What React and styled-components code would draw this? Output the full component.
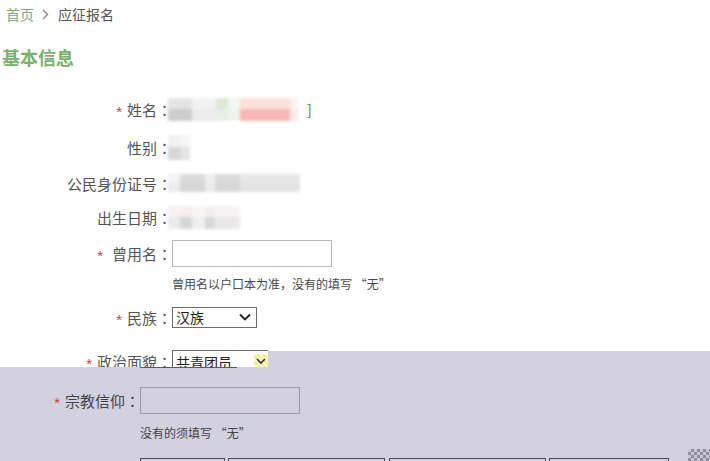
import React from "react";
import styled, { createGlobalStyle } from "styled-components";

const GlobalStyle = createGlobalStyle`
  html, body { margin: 0; padding: 0; background: #fff; }
  body { font-family: "Noto Sans CJK SC", "Noto Sans", sans-serif; color: #555; }
`;

const Page = styled.div`
  width: 710px;
  height: 461px;
  overflow: hidden;
  display: flex;
  flex-direction: column;
`;

const Breadcrumb = styled.nav`
  display: flex;
  align-items: center;
  height: 28px;
  padding-left: 6px;
  font-size: 14px;
  line-height: 28px;
`;

const CrumbLink = styled.span`
  color: #86a67c;
`;

const CrumbSep = styled.span`
  display: inline-flex;
  margin: 0 9px 0 8px;
  color: #8a8a8a;
`;

const CrumbCurrent = styled.span`
  color: #555;
`;

const Title = styled.h2`
  margin: 18px 0 0;
  padding-left: 2px;
  height: 22px;
  line-height: 22px;
  font-size: 18px;
  font-weight: 700;
  color: #7cb06e;
`;

const Divider = styled.div`
  margin-top: 11px;
  height: 1px;
  background: #cacaca;
`;

const Row = styled.div`
  display: flex;
  align-items: ${(p) => p.$align || "center"};
  height: ${(p) => p.$h}px;
  margin-top: ${(p) => p.$mt}px;
  overflow: ${(p) => (p.$clip ? "hidden" : "visible")};
  flex-shrink: 0;
`;

const LabelCell = styled.div`
  width: ${(p) => p.$w || 172}px;
  height: ${(p) => p.$lh || 28}px;
  flex-shrink: 0;
  display: flex;
  justify-content: flex-end;
  align-items: center;
  font-size: 15px;
  color: ${(p) => p.$color || "#555"};
  white-space: nowrap;
`;

const Star = styled.span`
  color: #c9403a;
  font-family: "Liberation Sans", sans-serif;
  font-size: 15px;
  margin-right: ${(p) => p.$gap || 5}px;
  transform: translateY(2px);
`;

const Colon = styled.span`
  font-family: "Noto Sans CJK JP", sans-serif;
`;

const Mosaic = styled.div`
  display: flex;
  margin-left: -4px;
  height: ${(p) => p.$h}px;
  filter: blur(1.8px);
`;

const Cell = styled.div`
  width: ${(p) => p.$w}px;
  background: linear-gradient(${(p) => p.$top} 0 50%, ${(p) => p.$bottom} 50% 100%);
`;

const Bracket = styled.span`
  margin-left: 9px;
  font-size: 14px;
  color: #666;
`;

const TextInput = styled.div`
  box-sizing: border-box;
  width: 160px;
  height: 27px;
  border: 1px solid ${(p) => p.$border || "#b8b8b8"};
  background: ${(p) => p.$bg || "#fff"};
`;

const Hint = styled.div`
  margin-top: ${(p) => p.$mt}px;
  padding-left: ${(p) => p.$pl}px;
  height: 16px;
  line-height: 16px;
  font-size: 12px;
  color: ${(p) => p.$color || "#4a4a4a"};
  flex-shrink: 0;
`;

const SelectBox = styled.div`
  box-sizing: border-box;
  display: flex;
  align-items: center;
  width: ${(p) => p.$w}px;
  height: ${(p) => p.$h}px;
  padding-left: 3px;
  border: 1px solid #6e6e6e;
  ${(p) => (p.$open ? "border-right: none; border-bottom: none;" : "")}
  font-size: 14px;
  color: #222;
  background: #fff;
  flex-shrink: 0;
`;

const Chevron = styled.svg`
  margin-left: auto;
  margin-right: 5px;
`;

const Glitch = styled.span`
  display: inline-flex;
  align-items: center;
  justify-content: center;
  margin-left: auto;
  width: 14px;
  height: 15px;
  background: repeating-linear-gradient(45deg, #f4f08c 0 2px, #fbfbd8 2px 4px);
`;

const Fill = styled.div`
  flex: 1;
  align-self: stretch;
  margin-top: 1px;
  background: #d3d1e0;
`;

const Shade = styled.section`
  flex: 1;
  display: flex;
  flex-direction: column;
  background: #d3d1e0;
`;

const TopLine = styled.div`
  margin-left: 140px;
  width: 97px;
  height: 1px;
  background: #5a5a62;
  flex-shrink: 0;
`;

const Boxes = styled.div`
  display: flex;
  align-items: flex-start;
  margin-top: ${(p) => p.$mt}px;
  padding-left: 140px;
  flex-shrink: 0;
`;

const Box = styled.div`
  box-sizing: border-box;
  width: ${(p) => p.$w}px;
  height: 12px;
  margin-left: ${(p) => p.$ml || 0}px;
  border: 1.5px solid #4b4a56;
  border-bottom: none;
`;

const Checker = styled.div`
  margin-left: auto;
  margin-top: -9px;
  width: 22px;
  height: 16px;
  background-color: #b8b6c6;
  background-image: repeating-conic-gradient(#8f8d9c 0 25%, #c9c7d6 0 50%);
  background-size: 6px 6px;
`;

const Down = () => (
  <Chevron width="12" height="8" viewBox="0 0 12 8">
    <path d="M1 1.5 L6 6.5 L11 1.5" fill="none" stroke="#222" strokeWidth="1.8" />
  </Chevron>
);

const blurred = {
  name: [
    [24, "#e4e4e4", "#cdcdcd"],
    [24, "#f2f2f2", "#ececec"],
    [12, "#dbe9d7", "#e8f0e6"],
    [12, "#f3f6f2", "#eef3ee"],
    [50, "#fde0dd", "#f8b8b3"],
    [8, "#fff3f2", "#fde9e7"],
  ],
  gender: [
    [13, "#f1f1f1", "#d7d7d7"],
    [9, "#f6f6f6", "#e6e6e6"],
  ],
  id: [
    [12, "#f3f3f3", "#ececec"],
    [25, "#dadada", "#d6d6d6"],
    [10, "#eeeeee", "#ebebeb"],
    [25, "#dbdbdb", "#d8d8d8"],
    [60, "#e7e7e7", "#e3e3e3"],
  ],
  birth: [
    [12, "#f7f1f1", "#ebebeb"],
    [12, "#f5efef", "#d7d7d7"],
    [13, "#f9f5f5", "#efefef"],
    [10, "#f3efef", "#d8d8d8"],
    [25, "#f5f3f3", "#e8e8e8"],
  ],
};

const Value = ({ cells, h }) => (
  <Mosaic $h={h}>
    {cells.map(([w, t, b], i) => (
      <Cell key={i} $w={w} $top={t} $bottom={b} />
    ))}
  </Mosaic>
);

export default function App() {
  return (
    <>
      <GlobalStyle />
      <Page>
        <Breadcrumb>
          <CrumbLink>首页</CrumbLink>
          <CrumbSep>
            <svg width="7" height="11" viewBox="0 0 7 11">
              <path d="M1 1 L5.5 5.5 L1 10" fill="none" stroke="#8a8a8a" strokeWidth="1.4" />
            </svg>
          </CrumbSep>
          <CrumbCurrent>应征报名</CrumbCurrent>
        </Breadcrumb>
        <Title>基本信息</Title>
        <Divider />

        <Row $h={28} $mt={16}>
          <LabelCell>
            <Star>*</Star>姓名<Colon>：</Colon>
          </LabelCell>
          <Value cells={blurred.name} h={23} />
          <Bracket>]</Bracket>
        </Row>
        <Row $h={28} $mt={10}>
          <LabelCell>
            性别<Colon>：</Colon>
          </LabelCell>
          <Value cells={blurred.gender} h={25} />
        </Row>
        <Row $h={28} $mt={8}>
          <LabelCell>
            公民身份证号<Colon>：</Colon>
          </LabelCell>
          <Value cells={blurred.id} h={18} />
        </Row>
        <Row $h={28} $mt={6}>
          <LabelCell>
            出生日期<Colon>：</Colon>
          </LabelCell>
          <Value cells={blurred.birth} h={23} />
        </Row>
        <Row $h={28} $mt={8}>
          <LabelCell>
            <Star $gap={9}>*</Star>曾用名<Colon>：</Colon>
          </LabelCell>
          <TextInput />
        </Row>
        <Hint $mt={9} $pl={172}>曾用名以户口本为准，没有的填写 “无”</Hint>
        <Row $h={28} $mt={11}>
          <LabelCell>
            <Star>*</Star>民族<Colon>：</Colon>
          </LabelCell>
          <SelectBox $w={85} $h={21}>
            汉族
            <Down />
          </SelectBox>
        </Row>
        <Row $h={17} $mt={19} $clip $align="flex-start">
          <LabelCell $lh={22}>
            <Star>*</Star>政治面貌<Colon>：</Colon>
          </LabelCell>
          <SelectBox $w={96} $h={22} $open>
            共青团员
            <Glitch>
              <svg width="10" height="7" viewBox="0 0 10 7">
                <path d="M1 1 L5 5 L9 1" fill="none" stroke="#333" strokeWidth="1.6" />
              </svg>
            </Glitch>
          </SelectBox>
          <Fill />
        </Row>

        <Shade>
          <TopLine />
          <Row $h={27} $mt={19}>
            <LabelCell $w={140} $color="#444">
              <Star>*</Star>宗教信仰<Colon>：</Colon>
            </LabelCell>
            <TextInput $border="#9a99a6" $bg="#d3d1e0" />
          </Row>
          <Hint $mt={11} $pl={140} $color="#444">没有的须填写 “无”</Hint>
          <Boxes $mt={17}>
            <Box $w={85} />
            <Box $w={157} $ml={3} />
            <Box $w={157} $ml={4} />
            <Box $w={120} $ml={3} />
            <Checker />
          </Boxes>
        </Shade>
      </Page>
    </>
  );
}
